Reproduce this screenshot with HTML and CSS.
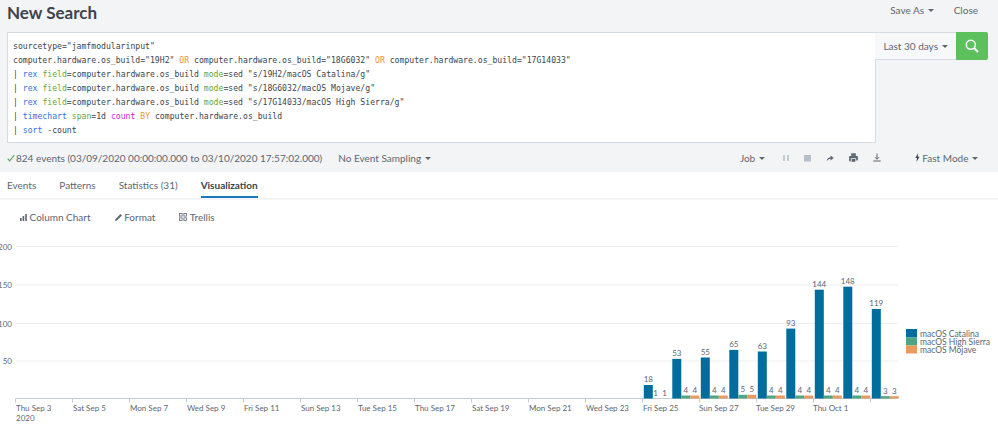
FILE: index.html
```html
<!DOCTYPE html>
<html lang="en">
<head>
    <meta charset="UTF-8">
    <title>New Search</title>
    <link rel="stylesheet" href="styles.css">
</head>
<body>
    <div class="top">
        <header class="title-row">
            <h1>New Search</h1>
            <nav class="title-actions">
                <a>Save As <i class="caret"></i></a>
                <a>Close</a>
            </nav>
        </header>

        <div class="search-row">
            <div class="search-box">
                <div>sourcetype="jamfmodularinput"</div>
                <div>computer.hardware.os_build="19H2" <span class="kw-op">OR</span> computer.hardware.os_build="18G6032" <span class="kw-op">OR</span> computer.hardware.os_build="17G14033"</div>
                <div>| <span class="kw-cmd">rex</span> <span class="kw-arg">field</span>=computer.hardware.os_build <span class="kw-arg">mode</span>=sed "s/19H2/macOS Catalina/g"</div>
                <div>| <span class="kw-cmd">rex</span> <span class="kw-arg">field</span>=computer.hardware.os_build <span class="kw-arg">mode</span>=sed "s/18G6032/macOS Mojave/g"</div>
                <div>| <span class="kw-cmd">rex</span> <span class="kw-arg">field</span>=computer.hardware.os_build <span class="kw-arg">mode</span>=sed "s/17G14033/macOS High Sierra/g"</div>
                <div>| <span class="kw-cmd">timechart</span> <span class="kw-arg">span</span>=1d <span class="kw-fn">count</span> <span class="kw-op">BY</span> computer.hardware.os_build</div>
                <div>| <span class="kw-cmd">sort</span> -count</div>
            </div>
            <button class="range-btn">Last 30 days <i class="caret"></i></button>
            <button class="go-btn" aria-label="Search">
                <svg width="14" height="14" viewBox="0 0 14 14" fill="none" stroke="#fff"><circle cx="5.8" cy="5.8" r="4.5" stroke-width="1.5"/><path d="M9.2 9.2l3.8 3.8" stroke-width="2"/></svg>
            </button>
        </div>

        <div class="status-row">
            <div class="status-left">
                <svg class="check" width="8" height="8" viewBox="0 0 8 8" fill="none" stroke="#53a051" stroke-width="1.1"><path d="M.7 4.6l2 2.2L7.3 1"/></svg>
                <span>824 events (03/09/2020 00:00:00.000 to 03/10/2020 17:57:02.000)</span>
                <a class="sampling">No Event Sampling <i class="caret"></i></a>
            </div>
            <div class="status-right">
                <a class="job">Job <i class="caret"></i></a>
                <svg class="tool" width="6" height="8" viewBox="0 0 6 8" fill="#c3cbd4"><rect x="0" y="1" width="2" height="6"/><rect x="4" y="1" width="2" height="6"/></svg>
                <svg class="tool" width="7" height="8" viewBox="0 0 7 8" fill="#b6bec8"><rect y="1" width="7" height="6.5"/></svg>
                <svg class="tool" width="8" height="8" viewBox="0 0 8 8" fill="#5c6773"><path d="M.6 7.4C1 4.7 2.6 3.4 4.6 3.3V1.4L7.7 4 4.6 6.5V4.8C3 4.8 1.8 5.6.6 7.4z"/></svg>
                <svg class="tool" width="9" height="9" viewBox="0 0 9 9" fill="#5c6773"><rect x="2.2" y="0.3" width="4.6" height="2.6"/><path d="M.8 3h7.4c.4 0 .7.3.7.7v3c0 .4-.3.7-.7.7h-1V5.2H1.8v3.2h-1C.4 8.4.1 8 .1 6.7v-3C.1 3.3.4 3 .8 3z"/><rect x="2.6" y="6" width="3.8" height="2.8"/></svg>
                <svg class="tool" width="8" height="9" viewBox="0 0 8 9" fill="none" stroke="#5c6773" stroke-width="1"><path d="M4 .5v5.5M2 4.2L4 6.3l2-2.1M.3 8h7.4"/></svg>
                <a class="mode">
                    <svg width="5" height="9" viewBox="0 0 5 9" fill="#3c444d"><path d="M3.2 0L.3 5h1.8L1.4 9l3.2-5.3H2.7z"/></svg>
                    Fast Mode <i class="caret"></i>
                </a>
            </div>
        </div>
    </div>

    <nav class="tabs">
        <a>Events</a>
        <a>Patterns</a>
        <a>Statistics (31)</a>
        <a class="active">Visualization</a>
    </nav>

    <div class="viz-bar">
        <a>
            <svg width="7" height="7" viewBox="0 0 7 7" fill="#5c6773"><rect y="4" width="1.6" height="3"/><rect x="2.6" y="2" width="1.6" height="5"/><rect x="5.2" width="1.6" height="7"/></svg>
            Column Chart
        </a>
        <a>
            <svg width="7" height="7" viewBox="0 0 7 7" fill="#5c6773"><path d="M0 7l.4-1.8L5.4 0 7 1.6 1.9 6.6z"/></svg>
            Format
        </a>
        <a>
            <svg width="8" height="8" viewBox="0 0 8 8" fill="none" stroke="#5c6773" stroke-width=".8"><rect x=".5" y=".5" width="2.6" height="2.6"/><rect x="4.9" y=".5" width="2.6" height="2.6"/><rect x=".5" y="4.9" width="2.6" height="2.6"/><rect x="4.9" y="4.9" width="2.6" height="2.6"/></svg>
            Trellis
        </a>
    </div>

    <svg class="chart" width="998" height="198" viewBox="0 230 998 198">
        <g class="grid">
            <path d="M16 246.5H898M16 285H898M16 323.5H898M16 361H898"/>
        </g>
        <g class="axis">
            <path d="M15.5 398.5H898"/>
            <path d="M15.5 398.5v4M72.5 398.5v4M129.5 398.5v4M186.5 398.5v4M243.5 398.5v4M300.5 398.5v4M357.5 398.5v4M414.5 398.5v4M471.5 398.5v4M528.5 398.5v4M585.5 398.5v4M642.5 398.5v4M699.5 398.5v4M756.5 398.5v4M813.5 398.5v4M870.5 398.5v4"/>
        </g>
        <g class="y-labels">
            <text x="12" y="250">200</text>
            <text x="12" y="288">150</text>
            <text x="12" y="327">100</text>
            <text x="12" y="364">50</text>
        </g>
        <g class="x-labels">
            <text x="16" y="411">Thu Sep 3</text>
            <text x="16" y="421">2020</text>
            <text x="73" y="411">Sat Sep 5</text>
            <text x="130" y="411">Mon Sep 7</text>
            <text x="187" y="411">Wed Sep 9</text>
            <text x="244" y="411">Fri Sep 11</text>
            <text x="301" y="411">Sun Sep 13</text>
            <text x="358" y="411">Tue Sep 15</text>
            <text x="415" y="411">Thu Sep 17</text>
            <text x="472" y="411">Sat Sep 19</text>
            <text x="529" y="411">Mon Sep 21</text>
            <text x="586" y="411">Wed Sep 23</text>
            <text x="643" y="411">Fri Sep 25</text>
            <text x="699" y="411">Sun Sep 27</text>
            <text x="756" y="411">Tue Sep 29</text>
            <text x="813" y="411">Thu Oct 1</text>
        </g>
        <g class="s-catalina">
            <rect x="643.8" y="385" width="9" height="13.5"/>
            <rect x="672.3" y="358.9" width="9" height="39.6"/>
            <rect x="700.8" y="357.5" width="9" height="41"/>
            <rect x="729.3" y="349.9" width="9" height="48.6"/>
            <rect x="757.8" y="351.5" width="9" height="47"/>
            <rect x="786.3" y="328.6" width="9" height="69.9"/>
            <rect x="814.8" y="289.7" width="9" height="108.8"/>
            <rect x="843.3" y="286.7" width="9" height="111.8"/>
            <rect x="871.8" y="309" width="9" height="89.5"/>
        </g>
        <g class="s-sierra">
            <rect x="681.3" y="395.5" width="9" height="3"/>
            <rect x="709.8" y="395.5" width="9" height="3"/>
            <rect x="738.3" y="394.8" width="9" height="3.7"/>
            <rect x="766.8" y="395.5" width="9" height="3"/>
            <rect x="795.3" y="395.5" width="9" height="3"/>
            <rect x="823.8" y="395.5" width="9" height="3"/>
            <rect x="852.3" y="395.5" width="9" height="3"/>
            <rect x="880.8" y="396.2" width="9" height="2.3"/>
        </g>
        <g class="s-mojave">
            <rect x="690.3" y="395.5" width="9" height="3"/>
            <rect x="718.8" y="395.5" width="9" height="3"/>
            <rect x="747.3" y="394.8" width="9" height="3.7"/>
            <rect x="775.8" y="395.5" width="9" height="3"/>
            <rect x="804.3" y="395.5" width="9" height="3"/>
            <rect x="832.8" y="395.5" width="9" height="3"/>
            <rect x="861.3" y="395.5" width="9" height="3"/>
            <rect x="889.8" y="396.2" width="9" height="2.3"/>
        </g>
        <g class="bar-labels">
            <text x="648.3" y="382">18</text><text x="655.5" y="396">1</text><text x="664.5" y="396">1</text>
            <text x="676.8" y="356">53</text><text x="685.8" y="393">4</text><text x="694.8" y="393">4</text>
            <text x="705.3" y="355">55</text><text x="714.3" y="393">4</text><text x="723.3" y="393">4</text>
            <text x="733.8" y="347">65</text><text x="742.8" y="392">5</text><text x="751.8" y="392">5</text>
            <text x="762.3" y="348.5">63</text><text x="771.3" y="393">4</text><text x="780.3" y="393">4</text>
            <text x="790.8" y="325.5">93</text><text x="799.8" y="393">4</text><text x="808.8" y="393">4</text>
            <text x="819.3" y="287">144</text><text x="828.3" y="393">4</text><text x="837.3" y="393">4</text>
            <text x="847.8" y="284">148</text><text x="856.8" y="393">4</text><text x="865.8" y="393">4</text>
            <text x="876.3" y="306">119</text><text x="885.3" y="394">3</text><text x="894.3" y="394">3</text>
        </g>
        <g class="legend">
            <rect class="key-catalina" x="906" y="329" width="11" height="8.5"/>
            <rect class="key-sierra" x="906" y="337.5" width="11" height="8"/>
            <rect class="key-mojave" x="906" y="345.5" width="11" height="8"/>
            <text x="920" y="337">macOS Catalina</text>
            <text x="920" y="345">macOS High Sierra</text>
            <text x="920" y="353">macOS Mojave</text>
        </g>
    </svg>
</body>
</html>
```
FILE: styles.css
```css
* {
    box-sizing: border-box;
    margin: 0;
    padding: 0;
}

body {
    width: 998px;
    height: 428px;
    overflow: hidden;
    background: #fff;
    color: #5c6773;
    font-family: Lato, "Liberation Sans", sans-serif;
    font-size: 10px;
}

.caret {
    display: inline-block;
    width: 0;
    height: 0;
    margin-left: 1px;
    vertical-align: 2px;
    border-left: 3px solid transparent;
    border-right: 3px solid transparent;
    border-top: 3px solid currentColor;
}

.top {
    height: 172px;
    background: #f2f4f5;
}

.title-row {
    display: flex;
    justify-content: space-between;
    height: 32px;
    padding: 0 20px 0 7px;
}

h1 {
    font-size: 17px;
    font-weight: 700;
    line-height: 25px;
    color: #3c444d;
}

.title-actions {
    display: flex;
    gap: 20px;
    line-height: 20px;
}

.search-row {
    display: flex;
    align-items: flex-start;
    padding-left: 7px;
}

.search-box {
    width: 869px;
    height: 111px;
    padding: 6px 5px 0;
    background: #fff;
    border: 1px solid #d5dbe2;
    font-family: "DejaVu Sans Mono", monospace;
    font-size: 8.13px;
    line-height: 14px;
    white-space: nowrap;
    color: #3c444d;
}

.kw-op { color: #f58f39; }
.kw-cmd { color: #2f74e0; }
.kw-arg { color: #65a637; }
.kw-fn { color: #d41fd4; }

.range-btn {
    width: 81px;
    height: 28px;
    margin-left: -1px;
    background: #f7f8fa;
    border: 0;
    border-top: 1px solid #d5dbe2;
    border-bottom: 1px solid #d5dbe2;
    color: #5c6773;
    font: inherit;
}

.go-btn {
    display: flex;
    align-items: center;
    justify-content: center;
    width: 32px;
    height: 28px;
    background: #5cc05c;
    border: 0;
    border-radius: 0 2px 2px 0;
}

.status-row {
    display: flex;
    justify-content: space-between;
    align-items: center;
    height: 29px;
    padding: 0 20px 0 7px;
}

.status-left,
.status-right {
    display: flex;
    align-items: center;
}

.check {
    margin-right: 1px;
}

.sampling {
    margin-left: 16px;
}

.status-right .tool {
    margin-left: 15px;
}

.job {
    margin-right: 3px;
}

.mode {
    margin-left: 34px;
    color: #5c6773;
}

.tabs {
    display: flex;
    gap: 23px;
    height: 28px;
    padding-left: 7px;
    border-bottom: 2px solid #f2f4f5;
}

.tabs a {
    height: 26px;
    line-height: 26px;
}

.tabs .active {
    font-weight: 700;
    color: #3c444d;
    border-bottom: 2px solid #1a7ab5;
}

.viz-bar {
    display: flex;
    gap: 24px;
    height: 30px;
    padding: 8px 0 0 20px;
    line-height: 18px;
}

.chart {
    display: block;
    font-family: Lato, "Liberation Sans", sans-serif;
    font-size: 8px;
    fill: #5c6773;
}

.grid path {
    fill: none;
    stroke: #eceff2;
}

.axis path {
    fill: none;
    stroke: #c3cbd4;
}

.y-labels text {
    text-anchor: end;
}

.bar-labels text {
    text-anchor: middle;
}

.legend text {
    font-size: 8.5px;
}

.s-catalina rect,
.key-catalina { fill: #006d9c; }

.s-sierra rect,
.key-sierra { fill: #4fa484; }

.s-mojave rect,
.key-mojave { fill: #ec9960; }
```
